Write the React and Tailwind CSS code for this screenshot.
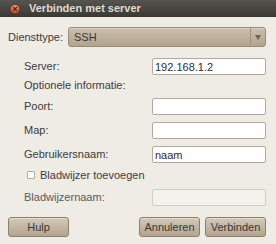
import React from "react";

const labelCls = "pl-[16px] text-[#3c3c3c]";
const inputCls =
  "w-[114px] h-[17px] bg-white border border-[#b3aa9c] rounded-[2px] px-[2px] text-[11px] text-[#2e2e2e] outline-none";

const FieldRow = ({ label, value = "", className = "", disabled = false }) => (
  <div className={`flex items-center justify-between h-[17px] ${className}`}>
    <span className={`${labelCls} ${disabled ? "text-[#5a5a5a]" : ""}`}>{label}</span>
    <input
      readOnly
      value={value}
      disabled={disabled}
      className={
        disabled
          ? "w-[114px] h-[17px] bg-[#f5f2ee] border border-[#d4cdc2] rounded-[2px]"
          : inputCls
      }
    />
  </div>
);

const Button = ({ children, className = "" }) => (
  <button
    className={`h-[20px] rounded-[3px] border border-[#8c7f6d] bg-gradient-to-b from-[#d3c9ba] to-[#b2a48f] text-[11px] text-[#3a3835] shadow-[inset_0_1px_0_rgba(255,255,255,0.35)] ${className}`}
  >
    {children}
  </button>
);

export default function App() {
  return (
    <div
      className="w-[276px] h-[244px] bg-[#efebe5] text-[11px] overflow-hidden"
      style={{ fontFamily: '"Liberation Sans", Arial, sans-serif' }}
    >
      {/* Title bar */}
      <div className="h-[17px] flex items-center bg-gradient-to-b from-[#56544f] to-[#3a3935]">
        <div className="ml-[10px] w-[10px] h-[10px] rounded-full bg-gradient-to-b from-[#f59a74] to-[#d9501f] border border-[#7a3a20] flex items-center justify-center">
          <svg width="6" height="6" viewBox="0 0 6 6">
            <path d="M1 1 L5 5 M5 1 L1 5" stroke="#4a2a1c" strokeWidth="1.2" />
          </svg>
        </div>
        <span className="ml-[9px] font-bold text-[#dfdbd2] text-[11px]">Verbinden met server</span>
      </div>

      <div className="pl-[8px] pr-[10px] pt-[10px] flex flex-col">
        {/* Service type */}
        <div className="flex items-center h-[20px]">
          <span className="w-[60px] text-[#3c3c3c]">Diensttype:</span>
          <div className="flex-1 h-[20px] rounded-[3px] border border-[#9a8c79] bg-gradient-to-b from-[#cbbfae] to-[#b2a38d] flex items-center shadow-[inset_0_1px_0_rgba(255,255,255,0.3)]">
            <span className="pl-[5px] flex-1 text-[#3a3835]">SSH</span>
            <div className="w-[15px] h-full border-l border-[#a39581] flex items-center justify-center">
              <svg width="6" height="5" viewBox="0 0 6 5">
                <path d="M0 0 H6 L3 5 Z" fill="#6b6357" />
              </svg>
            </div>
          </div>
        </div>

        <FieldRow label="Server:" value="192.168.1.2" className="mt-[11px]" />

        <div className="h-[20px] flex items-center">
          <span className={labelCls}>Optionele informatie:</span>
        </div>

        <FieldRow label="Poort:" className="mt-[3px]" />
        <FieldRow label="Map:" className="mt-[7px]" />
        <FieldRow label="Gebruikersnaam:" value="naam" className="mt-[7px]" />

        <div className="mt-[3px] h-[18px] flex items-center pl-[19px]">
          <span className="w-[8px] h-[8px] bg-white border border-[#b3aa9c] rounded-[1px]" />
          <span className="ml-[5px] text-[#3c3c3c]">Bladwijzer toevoegen</span>
        </div>

        <FieldRow label="Bladwijzernaam:" className="mt-[5px]" disabled />

        <div className="mt-[11px] flex items-center">
          <Button className="w-[61px]">Hulp</Button>
          <div className="flex-1" />
          <Button className="w-[61px]">Annuleren</Button>
          <Button className="w-[61px] ml-[5px]">Verbinden</Button>
        </div>
      </div>
    </div>
  );
}
